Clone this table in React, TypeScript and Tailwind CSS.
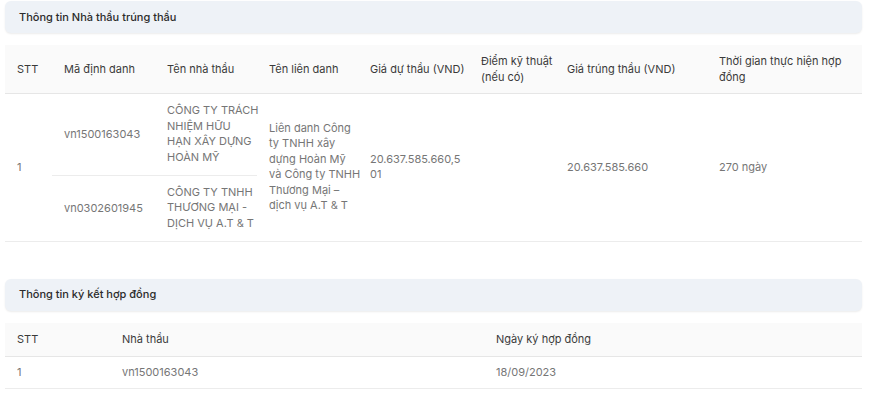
import React from "react";

const font = { fontFamily: "Inter, 'Noto Sans', sans-serif" };

function Title({ children }: { children: React.ReactNode }) {
  return (
    <div className="h-[32px] flex items-center rounded-md bg-[#eef2f7] pl-[14px] shadow-[0_1px_2px_rgba(0,0,0,0.08)] text-[11px] font-medium text-[#2b2b2b]">
      {children}
    </div>
  );
}

function Lines({ lines }: { lines: string[] }) {
  return (
    <div className="leading-[15.5px]">
      {lines.map((l, i) => (
        <div key={i} className="whitespace-nowrap">
          {l}
        </div>
      ))}
    </div>
  );
}

export default function App() {
  const th = "px-3 text-left align-middle font-normal text-[#3a3a3a] leading-[16px] whitespace-nowrap";
  const td = "px-3 align-middle text-[#767676]";
  return (
    <div className="bg-white min-h-[393px] pl-[5px] pr-[9px] pt-px text-[11px]" style={font}>
      <Title>Thông tin Nhà thầu trúng thầu</Title>
      <table className="mt-[12px] w-full table-fixed border-collapse">
        <colgroup>
          <col className="w-[47px]" />
          <col className="w-[103px]" />
          <col className="w-[102px]" />
          <col className="w-[101px]" />
          <col className="w-[111px]" />
          <col className="w-[86px]" />
          <col className="w-[152px]" />
          <col />
        </colgroup>
        <thead>
          <tr className="h-[48px] bg-[#fafafa] border-b border-[#e6e6e6]">
            <th className={th}>STT</th>
            <th className={th}>Mã định danh</th>
            <th className={th}>Tên nhà thầu</th>
            <th className={th}>Tên liên danh</th>
            <th className={th}>Giá dự thầu (VND)</th>
            <th className={th}>
              <div>Điểm kỹ thuật</div>
              <div>(nếu có)</div>
            </th>
            <th className={th}>Giá trúng thầu (VND)</th>
            <th className={th}>
              <div>Thời gian thực hiện hợp</div>
              <div>đồng</div>
            </th>
          </tr>
        </thead>
        <tbody>
          <tr className="h-[82px]">
            <td rowSpan={2} className={td + " border-b border-[#ececec]"}>1</td>
            <td className={td + " border-b border-[#ececec]"}>vn1500163043</td>
            <td className={td + " border-b border-[#ececec] py-[9px]"}>
              <Lines lines={["CÔNG TY TRÁCH", "NHIỆM HỮU", "HẠN XÂY DỰNG", "HOÀN MỸ"]} />
            </td>
            <td rowSpan={2} className={td + " border-b border-[#ececec]"}>
              <Lines
                lines={[
                  "Liên danh Công",
                  "ty TNHH xây",
                  "dựng Hoàn Mỹ",
                  "và Công ty TNHH",
                  "Thương Mại –",
                  "dịch vụ A.T & T",
                ]}
              />
            </td>
            <td rowSpan={2} className={td + " border-b border-[#ececec]"}>
              <Lines lines={["20.637.585.660,5", "01"]} />
            </td>
            <td rowSpan={2} className={td + " border-b border-[#ececec]"}></td>
            <td rowSpan={2} className={td + " border-b border-[#ececec]"}>20.637.585.660</td>
            <td rowSpan={2} className={td + " border-b border-[#ececec]"}>270 ngày</td>
          </tr>
          <tr className="h-[66px]">
            <td className={td + " border-b border-[#ececec]"}>vn0302601945</td>
            <td className={td + " border-b border-[#ececec] py-[8px]"}>
              <Lines lines={["CÔNG TY TNHH", "THƯƠNG MẠI -", "DỊCH VỤ A.T & T"]} />
            </td>
          </tr>
        </tbody>
      </table>

      <div className="mt-[37px]">
        <Title>Thông tin ký kết hợp đồng</Title>
      </div>
      <table className="mt-[12px] w-full table-fixed border-collapse">
        <colgroup>
          <col className="w-[105px]" />
          <col className="w-[374px]" />
          <col />
        </colgroup>
        <thead>
          <tr className="h-[34px] bg-[#fafafa] border-b border-[#e6e6e6]">
            <th className={th}>STT</th>
            <th className={th}>Nhà thầu</th>
            <th className={th}>Ngày ký hợp đồng</th>
          </tr>
        </thead>
        <tbody>
          <tr className="h-[32px] border-b border-[#ececec]">
            <td className={td}>1</td>
            <td className={td}>vn1500163043</td>
            <td className={td}>18/09/2023</td>
          </tr>
        </tbody>
      </table>
    </div>
  );
}
